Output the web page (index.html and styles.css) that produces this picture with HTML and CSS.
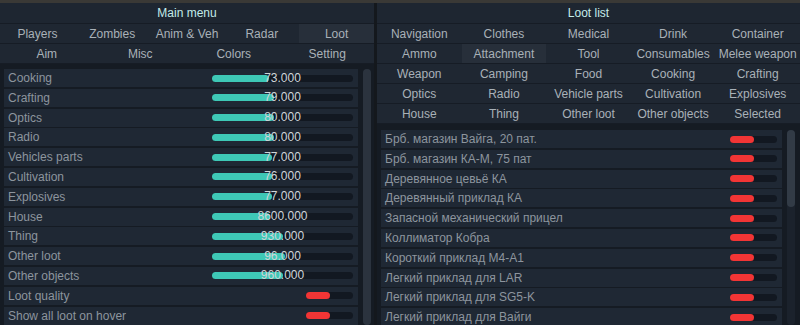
FILE: index.html
```html
<!DOCTYPE html>
<html lang="en">

<head>
    <meta charset="UTF-8">
    <title>Main menu / Loot list</title>
    <link rel="stylesheet" href="styles.css">
</head>

<body>
    <div class="screen">
        <!-- left window -->
        <section class="panel main-panel">
            <header class="title">Main menu</header>
            <nav class="tabs five">
                <span>Players</span>
                <span>Zombies</span>
                <span>Anim &amp; Veh</span>
                <span>Radar</span>
                <span class="active">Loot</span>
            </nav>
            <nav class="tabs four">
                <span>Aim</span>
                <span>Misc</span>
                <span>Colors</span>
                <span>Setting</span>
            </nav>
            <div class="list-wrap">
                <ul class="list">
                    <li><span class="label">Cooking</span><div class="slider"><div class="fill" style="width:57px"></div><span class="value">73.000</span></div></li>
                    <li><span class="label">Crafting</span><div class="slider"><div class="fill" style="width:62px"></div><span class="value">79.000</span></div></li>
                    <li><span class="label">Optics</span><div class="slider"><div class="fill" style="width:62px"></div><span class="value">80.000</span></div></li>
                    <li><span class="label">Radio</span><div class="slider"><div class="fill" style="width:62px"></div><span class="value">80.000</span></div></li>
                    <li><span class="label">Vehicles parts</span><div class="slider"><div class="fill" style="width:60px"></div><span class="value">77.000</span></div></li>
                    <li><span class="label">Cultivation</span><div class="slider"><div class="fill" style="width:60px"></div><span class="value">76.000</span></div></li>
                    <li><span class="label">Explosives</span><div class="slider"><div class="fill" style="width:60px"></div><span class="value">77.000</span></div></li>
                    <li><span class="label">House</span><div class="slider"><div class="fill" style="width:58px"></div><span class="value">8600.000</span></div></li>
                    <li><span class="label">Thing</span><div class="slider"><div class="fill" style="width:71px"></div><span class="value">930.000</span></div></li>
                    <li><span class="label">Other loot</span><div class="slider"><div class="fill" style="width:73px"></div><span class="value">96.000</span></div></li>
                    <li><span class="label">Other objects</span><div class="slider"><div class="fill" style="width:71px"></div><span class="value">960.000</span></div></li>
                    <li><span class="label">Loot quality</span><div class="toggle"><div class="knob"></div></div></li>
                    <li><span class="label">Show all loot on hover</span><div class="toggle"><div class="knob"></div></div></li>
                </ul>
                <div class="scroll"><div class="thumb full"></div></div>
            </div>
        </section>

        <!-- right window -->
        <section class="panel loot-panel">
            <header class="title">Loot list</header>
            <nav class="tabs five">
                <span>Navigation</span>
                <span>Clothes</span>
                <span>Medical</span>
                <span>Drink</span>
                <span>Container</span>
            </nav>
            <nav class="tabs five">
                <span>Ammo</span>
                <span class="active">Attachment</span>
                <span>Tool</span>
                <span>Consumables</span>
                <span>Melee weapon</span>
            </nav>
            <nav class="tabs five">
                <span>Weapon</span>
                <span>Camping</span>
                <span>Food</span>
                <span>Cooking</span>
                <span>Crafting</span>
            </nav>
            <nav class="tabs five">
                <span>Optics</span>
                <span>Radio</span>
                <span>Vehicle parts</span>
                <span>Cultivation</span>
                <span>Explosives</span>
            </nav>
            <nav class="tabs five">
                <span>House</span>
                <span>Thing</span>
                <span>Other loot</span>
                <span>Other objects</span>
                <span>Selected</span>
            </nav>
            <div class="list-wrap">
                <ul class="list">
                    <li><span class="label">Брб. магазин Вайга, 20 пат.</span><div class="toggle"><div class="knob"></div></div></li>
                    <li><span class="label">Брб. магазин КА-М, 75 пат</span><div class="toggle"><div class="knob"></div></div></li>
                    <li><span class="label">Деревянное цевьё КА</span><div class="toggle"><div class="knob"></div></div></li>
                    <li><span class="label">Деревянный приклад КА</span><div class="toggle"><div class="knob"></div></div></li>
                    <li><span class="label">Запасной механический прицел</span><div class="toggle"><div class="knob"></div></div></li>
                    <li><span class="label">Коллиматор Кобра</span><div class="toggle"><div class="knob"></div></div></li>
                    <li><span class="label">Короткий приклад M4-A1</span><div class="toggle"><div class="knob"></div></div></li>
                    <li><span class="label">Легкий приклад для LAR</span><div class="toggle"><div class="knob"></div></div></li>
                    <li><span class="label">Легкий приклад для SG5-K</span><div class="toggle"><div class="knob"></div></div></li>
                    <li><span class="label">Легкий приклад для Вайги</span><div class="toggle"><div class="knob"></div></div></li>
                </ul>
                <div class="scroll"><div class="thumb"></div></div>
            </div>
        </section>
    </div>
</body>

</html>
```

FILE: styles.css
```css
* {
    margin: 0;
    padding: 0;
    box-sizing: border-box;
}

body {
    width: 800px;
    height: 325px;
    overflow: hidden;
    background: #2f3132;
    font-family: "Liberation Sans", Arial, sans-serif;
    font-size: 12px;
}

.screen {
    display: flex;
    gap: 3px;
    padding-top: 3px;
    height: 100%;
    background: linear-gradient(#3a3936 0, #3a3936 3px, #14181d 3px);
}

.panel {
    display: flex;
    flex-direction: column;
    background: #151b23;
    overflow: hidden;
}

.main-panel {
    width: 374px;
}

.loot-panel {
    flex: 1;
}

.title {
    height: 21px;
    line-height: 20px;
    text-align: center;
    color: #c4ecea;
    background: #1e2631;
    border-bottom: 1px solid #161c25;
}

.tabs {
    display: grid;
    height: 20px;
    background: #1f2732;
    border-bottom: 1px solid #161c25;
}

.tabs.five {
    grid-template-columns: repeat(5, 1fr);
}

.tabs.four {
    grid-template-columns: repeat(4, 1fr);
}

.tabs span {
    padding-top: 1px;
    line-height: 18px;
    text-align: center;
    color: #a9b1b8;
    white-space: nowrap;
}

.tabs span.active {
    background: #272f3a;
}

/* list with scroll bar on the right */
.list-wrap {
    flex: 1;
    display: flex;
    padding: 6px 5px 0 4px;
    min-height: 0;
}

.main-panel .list-wrap {
    padding-top: 5px;
    padding-right: 3px;
}

.list {
    flex: 1;
    list-style: none;
}

.list li {
    display: flex;
    align-items: center;
    height: 18px;
    margin-bottom: 1.8px;
    padding-left: 4px;
    background: #1f2834;
}

.label {
    flex: 1;
    color: #8d959e;
    white-space: nowrap;
}

.slider {
    position: relative;
    width: 141px;
    height: 7px;
    margin-right: 5px;
    border-radius: 4px;
    background: #121821;
}

.fill {
    height: 100%;
    border-radius: 4px;
    background: #3ec8b6;
}

.value {
    position: absolute;
    left: 0;
    right: 0;
    top: -5px;
    line-height: 16px;
    text-align: center;
    color: #cfd5d9;
}

.toggle {
    width: 47px;
    height: 7px;
    margin-right: 5px;
    border-radius: 4px;
    background: #121821;
}

.knob {
    width: 24px;
    height: 100%;
    border-radius: 4px;
    background: #f23535;
}

.scroll {
    width: 8px;
    margin-left: 5px;
    border-radius: 4px;
    background: #1b222c;
}

.thumb {
    height: 77px;
    border-radius: 4px;
    background: #323b46;
}

.thumb.full {
    height: 100%;
    background: #2b333e;
}
```
